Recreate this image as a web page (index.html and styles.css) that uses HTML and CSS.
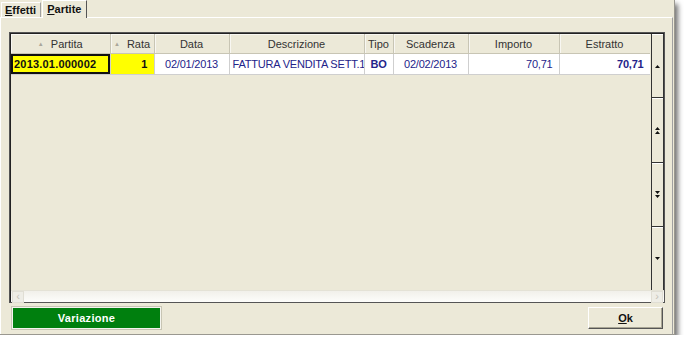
FILE: index.html
```html
<!DOCTYPE html>
<html lang="it">
<head>
  <meta charset="UTF-8">
  <title>Partite</title>
  <link rel="stylesheet" href="styles.css">
</head>
<body>

  <div class="window">
    <div class="tabs">
      <div class="tab"><u>E</u>ffetti</div>
      <div class="tab active"><u>P</u>artite</div>
    </div>

    <div class="panel">
      <div class="grid">
        <div class="grid-main">
          <table class="rows">
            <colgroup>
              <col style="width:99px"><col style="width:44px"><col style="width:75px"><col style="width:135px">
              <col style="width:29px"><col style="width:75px"><col style="width:91px"><col style="width:91px">
            </colgroup>
            <thead>
              <tr>
                <th><span class="sort">&#9650;</span> Partita</th>
                <th><span class="sort">&#9650;</span> Rata</th>
                <th>Data</th>
                <th>Descrizione</th>
                <th>Tipo</th>
                <th>Scadenza</th>
                <th>Importo</th>
                <th>Estratto</th>
              </tr>
            </thead>
            <tbody>
              <tr>
                <td class="key current">2013.01.000002</td>
                <td class="key num">1</td>
                <td class="center">02/01/2013</td>
                <td>FATTURA VENDITA SETT.1</td>
                <td class="center strong">BO</td>
                <td class="center">02/02/2013</td>
                <td class="num">70,71</td>
                <td class="num strong">70,71</td>
              </tr>
            </tbody>
          </table>
        </div>

        <div class="vscroll">
          <div class="vbtn">
            <svg width="5" height="3" viewBox="0 0 5 3"><path d="M2.5 0 L5 3 L0 3 Z" fill="#111"/></svg>
          </div>
          <div class="vbtn">
            <svg width="5" height="7" viewBox="0 0 5 7"><path d="M2.5 0 L5 3 L0 3 Z M2.5 4 L5 7 L0 7 Z" fill="#111"/></svg>
          </div>
          <div class="vbtn">
            <svg width="5" height="7" viewBox="0 0 5 7"><path d="M0 0 L5 0 L2.5 3 Z M0 4 L5 4 L2.5 7 Z" fill="#111"/></svg>
          </div>
          <div class="vbtn">
            <svg width="5" height="3" viewBox="0 0 5 3"><path d="M0 0 L5 0 L2.5 3 Z" fill="#111"/></svg>
          </div>
        </div>

        <div class="hscroll">
          <span class="harrow">&lsaquo;</span>
          <span class="harrow">&rsaquo;</span>
        </div>
      </div>

      <div class="actions">
        <button class="btn-green">Variazione</button>
        <button class="btn-ok"><u>O</u>k</button>
      </div>
    </div>
  </div>

</body>
</html>
```

FILE: styles.css
```css
html, body {
  margin: 0;
  padding: 0;
  background-color: white;
  font-family: "Liberation Sans", Arial, sans-serif;
  font-size: 11px;
  color: #111;
}

.window {
  width: 675px;
  height: 335px;
  background-color: #ece9d8;
  display: flex;
  flex-direction: column;
  box-shadow: 3px 4px 5px rgba(0, 0, 0, 0.55);
  border-right: 1px solid #9a9890;
  border-bottom: 1px solid #9a9890;
  box-sizing: border-box;
}

/* onglets */
.tabs {
  height: 17px;
  display: flex;
  align-items: flex-end;
  padding-left: 1px;
}

.tab {
  height: 14px;
  line-height: 14px;
  padding: 0 4px 0 3px;
  font-weight: bold;
  font-size: 11px;
  border-left: 1px solid white;
  border-top: 1px solid white;
  border-right: 1px solid #a0a0a0;
  margin-right: 1px;
}

.tab.active {
  height: 17px;
  line-height: 16px;
  padding: 0 5px 0 4px;
  border-right: 1px solid #555;
  position: relative;
  top: 1px;
  background-color: #ece9d8;
}

.panel {
  flex: 1;
  display: flex;
  flex-direction: column;
  border-top: 1px solid white;
  border-left: 1px solid white;
  border-right: 1px solid #a0a0a0;
  margin-right: 1px;
  padding: 14px 6px 3px 8px;
}

/* griglia */
.grid {
  height: 271px;
  width: 656px;
  box-sizing: border-box;
  border: 1px solid #555;
  box-shadow: inset 1px 1px 0 #222;
  display: grid;
  grid-template-columns: 1fr 14px;
  grid-template-rows: 1fr 12px;
  padding: 1px 0 0 1px;
}

.grid-main {
  overflow: hidden;
}

.rows {
  border-collapse: collapse;
  table-layout: fixed;
  width: 639px;
}

.rows th {
  height: 19px;
  padding: 0;
  font-weight: normal;
  color: #333;
  background-color: #ece9d8;
  border-right: 1px solid #c8c5b4;
  border-bottom: 1px solid #c8c5b4;
  box-shadow: inset 1px 1px 0 #f8f7f2;
  text-align: center;
  white-space: nowrap;
}

.sort {
  font-size: 6px;
  color: #aaa69a;
  vertical-align: 2px;
  margin-right: 4px;
}

.rows td {
  height: 20px;
  padding: 0 3px;
  background-color: white;
  color: #23238a;
  border-right: 1px solid #cfcfcf;
  border-bottom: 1px solid #cfcfcf;
  white-space: nowrap;
  overflow: hidden;
  letter-spacing: -0.2px;
}

.rows td.key {
  background-color: #ffff00;
  color: #111;
  font-weight: bold;
  letter-spacing: 0.2px;
}

.rows td.current {
  box-shadow: inset 0 0 0 2px #111;
}

.rows td.num { text-align: right; padding-right: 6px; }
.rows td.center { text-align: center; }
.rows td.strong { font-weight: bold; }

.vscroll {
  display: flex;
  flex-direction: column;
  border-left: 1px solid #333;
  border-right: 1px solid #333;
  margin-left: 1px;
  height: 256px;
}

.vbtn {
  flex: 1;
  display: flex;
  align-items: center;
  justify-content: center;
  border-top: 1px solid white;
  border-bottom: 1px solid #333;
}

.vbtn:last-child { border-bottom: none; }

.hscroll {
  grid-column: 1 / 3;
  display: flex;
  justify-content: space-between;
  align-items: center;
  background: linear-gradient(#f1f0ea, #fdfdfb);
  border-top: 1px solid #e4e2d6;
}

.harrow {
  width: 10px;
  height: 10px;
  line-height: 9px;
  text-align: center;
  color: #c4c2b8;
  font-size: 11px;
  background-color: #eeede6;
  border: 1px solid #e0ded4;
  margin: 0 1px;
}

/* pulsanti */
.actions {
  display: flex;
  justify-content: space-between;
  margin-top: 4px;
  padding: 0 3px 0 3px;
}

.actions button {
  height: 22px;
  font-family: "Liberation Sans", Arial, sans-serif;
  font-size: 11px;
  font-weight: bold;
  cursor: pointer;
}

.btn-green {
  width: 149px;
  background-color: #007f0e;
  color: white;
  border: 1px solid #f4f4ee;
  outline: 1px solid #c8c5b4;
  letter-spacing: 0.3px;
}

.btn-ok {
  width: 75px;
  background-color: #ece9d8;
  color: #111;
  border: 1px solid;
  border-color: white #555 #555 white;
  box-shadow: inset -1px -1px 0 #a8a594;
}
```
